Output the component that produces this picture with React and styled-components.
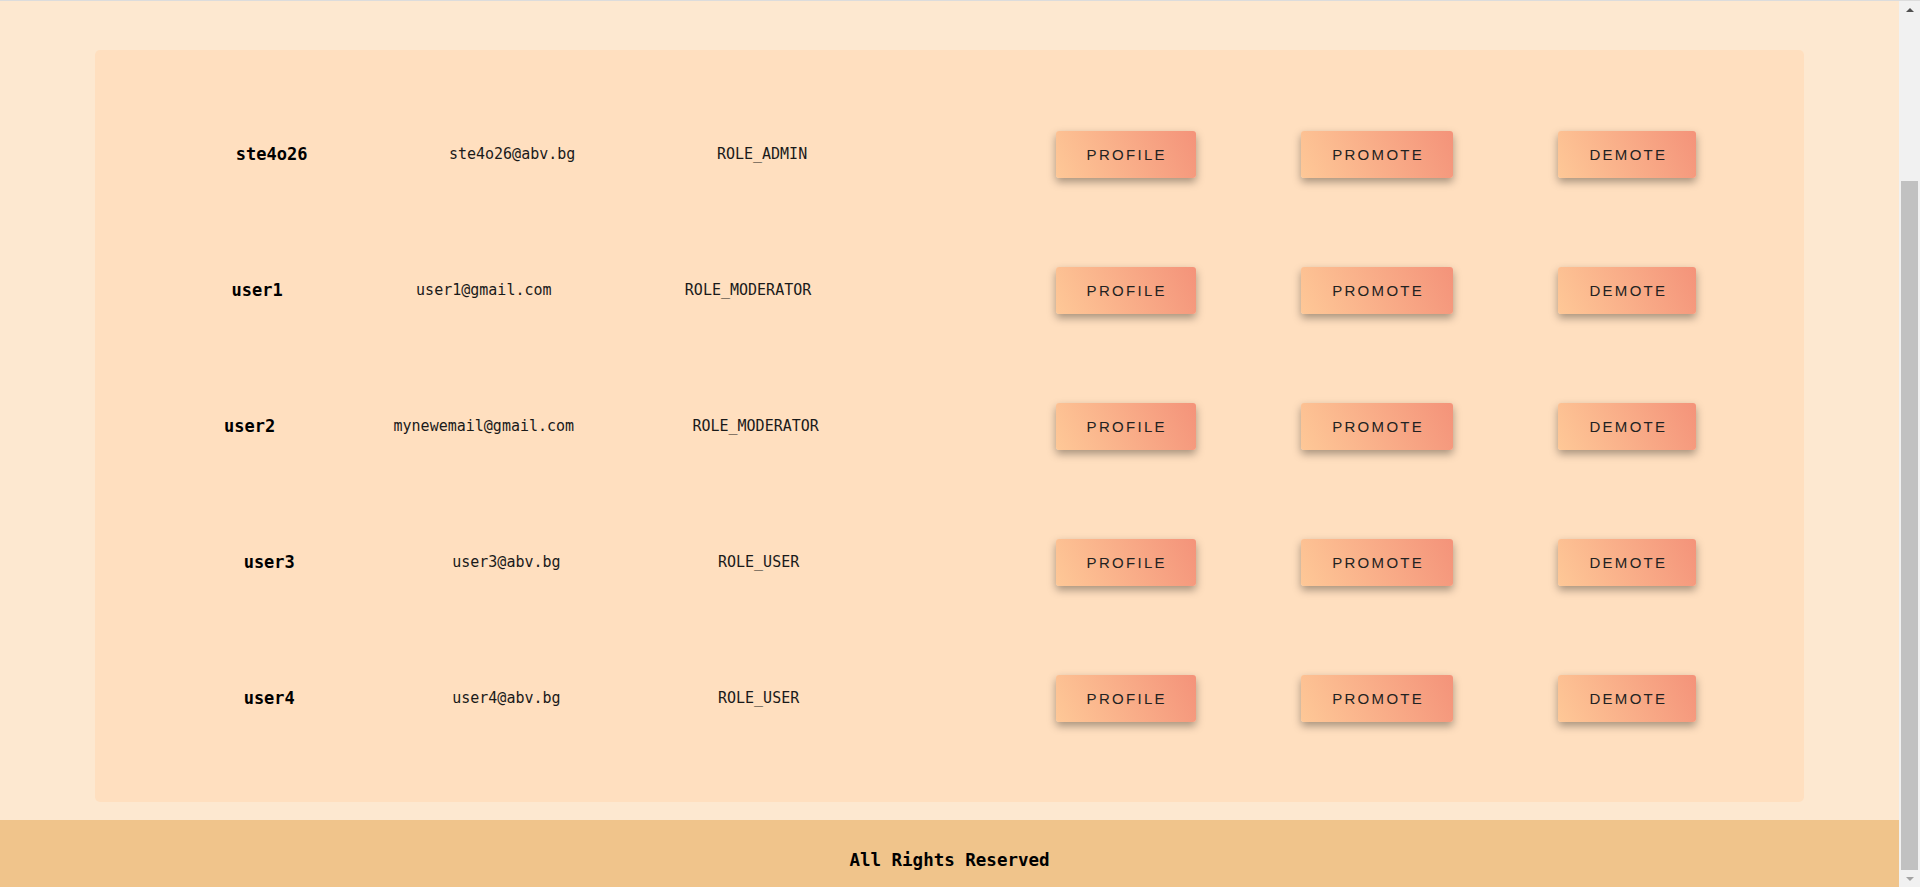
import React from 'react'
import styled, { createGlobalStyle } from 'styled-components'

const users = [
  { username: 'ste4o26', email: 'ste4o26@abv.bg', role: 'ROLE_ADMIN' },
  { username: 'user1', email: 'user1@gmail.com', role: 'ROLE_MODERATOR' },
  { username: 'user2', email: 'mynewemail@gmail.com', role: 'ROLE_MODERATOR' },
  { username: 'user3', email: 'user3@abv.bg', role: 'ROLE_USER' },
  { username: 'user4', email: 'user4@abv.bg', role: 'ROLE_USER' },
]

const GlobalStyle = createGlobalStyle`
  body {
    margin: 0;
    background: #fde8d0;
    font-family: "DejaVu Sans Mono", "Liberation Mono", monospace;
  }
`

function App() {
  return (
    <>
      <GlobalStyle />
      <Viewport>
        <Page>
          <Main>
            <Card>
              {users.map((u) => (
                <Row key={u.username}>
                  <Info>
                    <Username>{u.username}</Username>
                    <Cell>{u.email}</Cell>
                    <Cell>{u.role}</Cell>
                  </Info>
                  <Actions>
                    <Button>Profile</Button>
                    <Button>Promote</Button>
                    <Button>Demote</Button>
                  </Actions>
                </Row>
              ))}
            </Card>
          </Main>
          <Footer>All Rights Reserved</Footer>
        </Page>
        {/* window scrollbar, page is scrolled to the bottom */}
        <Scrollbar>
          <Arrow />
          <Track>
            <Thumb />
          </Track>
          <Arrow $down />
        </Scrollbar>
      </Viewport>
    </>
  )
}

const Viewport = styled.div`
  display: flex;
  height: 100vh;
  border-top: 1px solid #dcdcdc;
  box-sizing: border-box;
`

const Page = styled.div`
  flex: 1;
  min-width: 0;
  display: flex;
  flex-direction: column;
`

const Main = styled.main`
  flex: 1;
  padding: 49px 0 18px;
`

const Card = styled.section`
  width: 90%;
  margin: 0 auto;
  background: #ffdfbf;
  border-radius: 5px;
  padding: 36px 0;
  box-sizing: border-box;
`

const Row = styled.div`
  height: 136px;
  display: flex;
  align-items: center;
  gap: 125px;
  padding: 0 55px 0 70px;
`

const Info = styled.div`
  flex: 0 0 713px;
  display: flex;
  justify-content: space-around;
  align-items: center;
`

const Username = styled.span`
  font-size: 17px;
  font-weight: bold;
  color: #000;
`

const Cell = styled.span`
  font-size: 15px;
  color: #1a1a1a;
`

const Actions = styled.div`
  flex: 1;
  display: flex;
  justify-content: space-around;
  align-items: center;
`

const Button = styled.button`
  height: 47px;
  padding: 0 29px 0 31px;
  border: none;
  border-radius: 3px;
  background: linear-gradient(65deg, #fec897 0%, #f4937a 100%);
  box-shadow: 0 4px 8px rgba(0, 0, 0, 0.35);
  font-family: "Liberation Sans", Arial, sans-serif;
  font-size: 15px;
  letter-spacing: 2.3px;
  text-transform: uppercase;
  color: #222;
  cursor: pointer;
`

const Footer = styled.footer`
  background: #f0c48b;
  padding: 30px 0 17px;
  line-height: 20px;
  text-align: center;
  font-size: 17.5px;
  font-weight: bold;
  color: #000;
`

const Scrollbar = styled.div`
  flex: 0 0 21px;
  display: flex;
  flex-direction: column;
  background: #f1f1f1;
`

const Arrow = styled.div`
  height: 17px;
  display: flex;
  align-items: center;
  justify-content: center;

  &::before {
    content: "";
    border-left: 4px solid transparent;
    border-right: 4px solid transparent;
    ${(p) =>
      p.$down
        ? 'border-top: 4px solid #a3a3a3;'
        : 'border-bottom: 4px solid #505050;'}
  }
`

const Track = styled.div`
  flex: 1;
  display: flex;
  flex-direction: column;
  justify-content: flex-end;
  padding: 0 2px;
`

const Thumb = styled.div`
  height: 689px;
  background: #c1c1c1;
`

export default App
